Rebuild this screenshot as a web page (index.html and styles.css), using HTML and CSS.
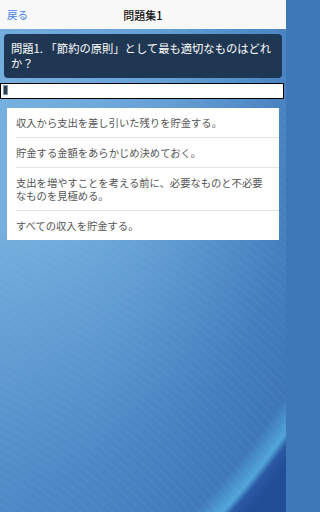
FILE: index.html
```html
<!DOCTYPE html>
<html lang="ja">
<head>
<meta charset="utf-8">
<link rel="stylesheet" href="styles.css">
</head>
<body>
<header class="nav">
  <span class="back">戻る</span>
  <span class="title">問題集1</span>
  <span></span>
</header>
<main class="content">
  <div class="question">問題1. 「節約の原則」として最も適切なものはどれか？</div>
  <div class="progress"><div class="progress-fill"></div></div>
  <ul class="options">
    <li class="opt">収入から支出を差し引いた残りを貯金する。</li>
    <li class="opt">貯金する金額をあらかじめ決めておく。</li>
    <li class="opt">支出を増やすことを考える前に、必要なものと不必要なものを見極める。</li>
    <li class="opt">すべての収入を貯金する。</li>
  </ul>
</main>
</body>
</html>
```
FILE: styles.css
```css
html {
  margin: 0;
  padding: 0;
  background: #3f78b9;
}
body {
  margin: 0;
  padding: 0;
  width: 286px;
  height: 512px;
  overflow: hidden;
  font-family: "Noto Sans CJK JP", "Noto Sans", sans-serif;
  background-color: #4f8bc8;
  background-image:
    radial-gradient(circle 740px at -307px 23px, rgba(0,0,0,0) 94.6%, rgba(95,195,238,0.6) 97.4%, #2b5aa4 98.3%, #224d97 100%),
    repeating-radial-gradient(circle at -250px 900px, rgba(170,215,245,0) 0px, rgba(170,215,245,0) 5px, rgba(170,215,245,0.08) 6px, rgba(170,215,245,0) 7px),
    linear-gradient(to bottom, rgba(45,100,175,0) 45%, rgba(45,100,175,0.35) 100%),
    radial-gradient(ellipse 240px 300px at 15% 35%, rgba(140,195,235,0.5), rgba(140,195,235,0)),
    linear-gradient(100deg, #6aa6d8 0%, #5a97cf 45%, #3f78b9 100%);
}
.nav {
  height: 29px;
  background: #f8f8f8;
  display: grid;
  grid-template-columns: 1fr auto 1fr;
  align-items: center;
}
.back {
  padding-left: 7px;
  font-size: 10.5px;
  color: #3f80e8;
}
.title {
  font-size: 11px;
  font-weight: 500;
  color: #111;
}
.content {
  padding: 5px 4px 0;
}
.question {
  background: #1f3752;
  border-radius: 4px;
  color: #fff;
  font-size: 11.3px;
  line-height: 15px;
  padding: 7px 7px;
}
.progress {
  margin: 5px -2px 0 -4px;
  height: 12px;
  border: 1px solid #000;
  background: #fff;
  padding: 1px 2px;
  box-sizing: content-box;
}
.progress-fill {
  width: 3px;
  height: 8px;
  background: #2d3d4b;
  border: 1px solid #7f97a8;
}
.options {
  list-style: none;
  margin: 9px 3px 0;
  padding: 0;
  background: #fff;
}
.opt {
  margin-left: 9px;
  padding: 8px 9px 8px 0;
  font-size: 10.3px;
  line-height: 13px;
  color: #555;
  border-top: 1px solid #e2e2e2;
}
.opt:first-child {
  border-top: none;
}
```
